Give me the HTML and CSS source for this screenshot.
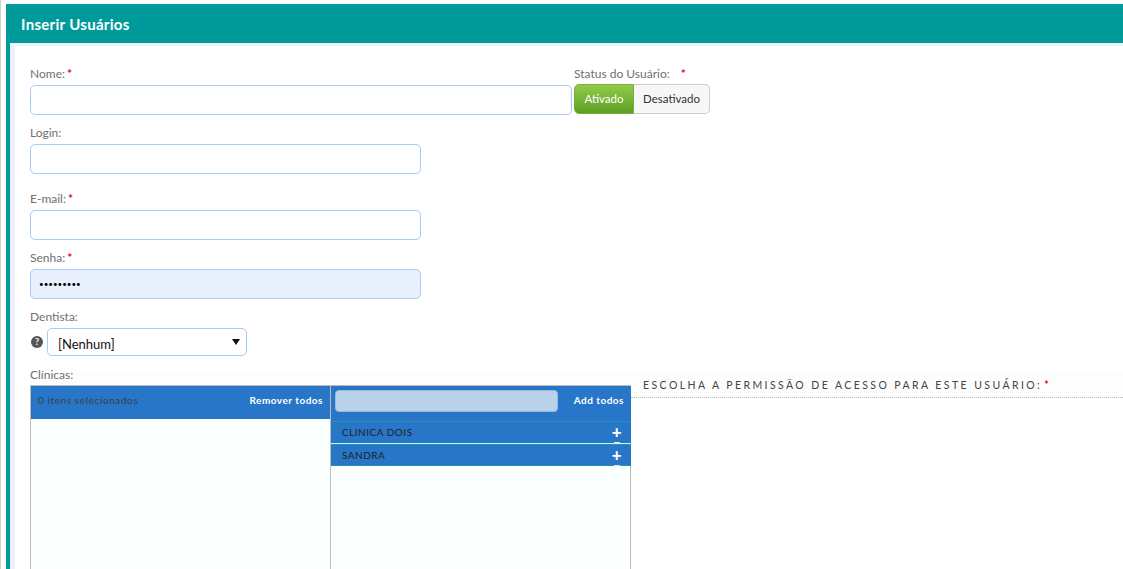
FILE: index.html
```html
<!DOCTYPE html>
<html lang="pt">
<head>
<meta charset="utf-8">
<title>Inserir Usuários</title>
<link rel="stylesheet" href="styles.css">
</head>
<body>
<div class="page">
  <div class="panel">
    <h1 class="panel-title">Inserir Usuários</h1>
    <div class="panel-body">
      <div class="top-row">
        <div class="field-name">
          <label class="label">Nome:<span class="req">*</span></label>
          <input class="input input-wide" type="text">
        </div>
        <div class="field-status">
          <label class="label status-label">Status do Usuário:<span class="req req-status">*</span></label>
          <div class="toggle">
            <span class="toggle-on">Ativado</span>
            <span class="toggle-off">Desativado</span>
          </div>
        </div>
      </div>
      <div class="field login-field">
        <label class="label">Login:</label>
        <input class="input" type="text">
      </div>
      <div class="field email-field">
        <label class="label">E-mail:<span class="req">*</span></label>
        <input class="input" type="text">
      </div>
      <div class="field senha-field">
        <label class="label">Senha:<span class="req">*</span></label>
        <input class="input input-filled" type="password" value="123456789">
      </div>
      <div class="field dentista-field">
        <label class="label">Dentista:</label>
        <div class="select-row">
          <svg class="help" viewBox="0 0 12 12" width="12" height="12"><circle cx="6" cy="6" r="6" fill="#555"/><text x="6" y="9.4" text-anchor="middle" class="help-mark">?</text></svg>
          <div class="select"><span>[Nenhum]</span><i class="caret"></i></div>
        </div>
      </div>
      <div class="lower">
        <div class="clinics">
          <label class="label clinics-label">Clínicas:</label>
          <div class="multi">
            <div class="multi-col multi-left">
              <div class="multi-head head-left">
                <span class="count">0 itens selecionados</span>
                <span class="all">Remover todos</span>
              </div>
            </div>
            <div class="multi-col multi-right">
              <div class="multi-head head-right">
                <div class="search"></div>
                <span class="all">Add todos</span>
              </div>
              <div class="item item-first"><span>CLINICA DOIS</span><b class="plus">+</b></div>
              <div class="item"><span>SANDRA</span><b class="plus">+</b></div>
            </div>
          </div>
        </div>
        <div class="perm">
          <h2 class="perm-title">Escolha a permissão de acesso para este usuário:<span class="req">*</span></h2>
        </div>
      </div>
    </div>
  </div>
</div>
</body>
</html>
```
FILE: styles.css
```css
* { box-sizing: border-box; }
html, body { margin: 0; height: 100%; overflow: hidden; background: #fff; }
body { font-family: Lato, sans-serif; color: #666; }
.page { height: 569px; border-left: 1px solid #d2d0c8; padding: 4px 0 0 5px; overflow: hidden; }
.panel { height: 565px; border-left: 4px solid #009a9a; background: #eef2f7; }
.panel-title { margin: 0; height: 39px; background: #009a9a; color: #fff; font-size: 15px; font-weight: 700; letter-spacing: .3px; line-height: 41px; padding-left: 11px; }
.panel-body { margin: 2px 0 0 5px; height: 524px; background: #fff; border-top: 1px solid #eef2f7; padding: 20px 0 0 15px; }
.label { display: block; font-size: 12px; line-height: 15px; color: #707070; }
.field .label { line-height: 13px; margin-bottom: 5px; }
.req { color: #e00; font-weight: 700; margin-left: 2px; }
.req-status { margin-left: 11px; }
.top-row { display: flex; gap: 2px; align-items: flex-start; }
.input { display: block; width: 391px; height: 30px; border: 1px solid #aac8fa; border-radius: 5px; background: #fff; margin-top: 3px; padding: 0 8px; font-family: Lato, sans-serif; outline: none; }
.field-name .input { margin-top: 4px; }
.input-wide { width: 542px; }
.input-filled { background: #e8f0fe; font-size: 8px; color: #000; }
.toggle { display: flex; height: 30px; margin-top: 3px; font-size: 11.5px; line-height: 28px; font-weight: 400; }
.toggle-on { width: 60px; text-align: center; color: #fff; border-radius: 5px 0 0 5px; background: linear-gradient(#93cb4b, #5c9e24); border: 1px solid #79ae3a; }
.toggle-off { width: 76px; text-align: center; color: #333; background: #f7f7f7; border: 1px solid #ccc; border-left: 0; border-radius: 0 5px 5px 0; }
.login-field { margin-top: 11px; }
.email-field { margin-top: 18px; }
.senha-field { margin-top: 11px; }
.dentista-field { margin-top: 11px; }
.select-row { display: flex; align-items: center; gap: 4px; margin-top: 3px; padding-left: 1px; }
.help { flex: none; }
.help-mark { font: 700 9px Lato, sans-serif; fill: #fff; }
.select { position: relative; width: 200px; height: 28px; border: 1px solid #aac8fa; border-radius: 5px; font-size: 13px; color: #111; line-height: 30px; padding-left: 10px; }
.caret { position: absolute; right: 6px; top: 10px; border: 4px solid transparent; border-top: 6px solid #111; border-bottom: 0; }
.lower { display: flex; margin-top: 16px; height: 200px; }
.clinics { width: 601px; flex: none; }
.clinics-label { height: 13px; line-height: 6px; background: #fdfdfd; }
.multi { display: flex; height: 190px; border: 1px solid #bbb; border-width: 1px 1px 0; background: #fbfffd; }
.multi-col { width: 300px; flex: none; }
.multi-left { border-right: 1px solid #bbb; }
.multi-head { background: #2776c8; display: flex; justify-content: space-between; font-size: 10px; }
.head-left { height: 33px; padding: 8px 7px 0; line-height: 13px; }
.head-right { height: 35px; padding: 4px 7px 0 4px; line-height: 20px; }
.count { color: #3a3f4a; letter-spacing: .6px; }
.all { color: #fff; font-weight: 700; letter-spacing: .5px; }
.search { width: 223px; height: 22px; background: #b9d2ec; border: 1px solid #9db8d8; border-radius: 4px; }
.item { display: flex; justify-content: space-between; height: 22px; background: #2776c8; border-top: 1px solid #2491b4; border-bottom: 1px solid #2491b4; color: #222; font-size: 10px; line-height: 20px; padding: 0 9px 0 11px; letter-spacing: .5px; }
.item-first { border-bottom: 0; box-shadow: 0 1px 0 #c8f4f8; margin-bottom: 1px; }
.plus { display: flex; flex-direction: column; align-items: center; color: #fff; font-size: 17px; font-weight: 900; line-height: 20px; height: 20px; }
.plus::after { content: ""; flex: none; width: 6px; height: 1px; background: #d8e6f5; }
.perm { flex: 1; }
.perm-title { margin: 0; padding: 6px 0 0 12px; height: 26px; background: #fdfdfd; border-bottom: 1px dotted #bbb; font-size: 10.5px; font-weight: 400; line-height: 14px; color: #444; text-transform: uppercase; letter-spacing: 2.42px; }
```
